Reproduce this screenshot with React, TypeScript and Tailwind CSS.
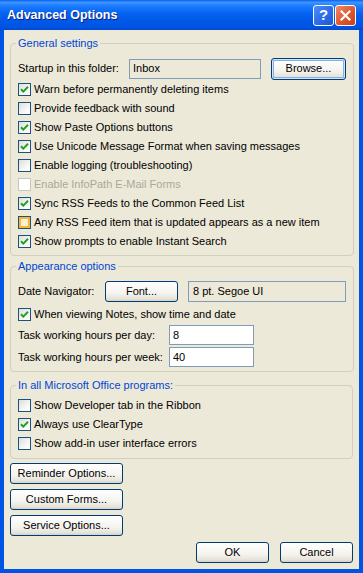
import React from 'react';

const FONT = "font-['Liberation_Sans','Arial',sans-serif]";

const btnBase =
  'flex items-center justify-center rounded-[3px] border border-[#003C74] bg-[linear-gradient(180deg,#FFFFFF_0%,#F4F3EE_60%,#E6E3D8_88%,#D6D0C5_100%)] text-[11px] text-black';

const XpButton: React.FC<{ label: string; className?: string; focused?: boolean }> = ({ label, className = '', focused }) => (
  <button
    className={`${btnBase} ${className} ${focused ? 'shadow-[inset_0_0_0_1px_#CEE7FF,inset_0_0_0_2px_#89ADE4]' : ''}`}
  >
    {label}
  </button>
);

const CheckBox: React.FC<{ checked?: boolean; disabled?: boolean; hot?: boolean }> = ({ checked, disabled, hot }) => {
  let cls = 'border-[#1C5180] bg-[linear-gradient(135deg,#DCDCD7_0%,#F6F6F4_60%,#FFFFFF_100%)]';
  if (disabled) cls = 'border-[#CAC8BB] bg-white';
  if (hot) cls = 'border-[#1C5180] bg-[#FFF0CF] shadow-[inset_0_0_0_2px_#F8B636]';
  return (
    <span className={`relative flex h-[13px] w-[13px] shrink-0 items-center justify-center border ${cls}`}>
      {checked && (
        <svg width="11" height="11" viewBox="0 0 11 11">
          <path d="M2 5.2 L4.3 7.6 L9 2.8" fill="none" stroke="#21A121" strokeWidth="2" />
        </svg>
      )}
    </span>
  );
};

const CheckRow: React.FC<{ label: string; checked?: boolean; disabled?: boolean; hot?: boolean }> = ({
  label,
  checked,
  disabled,
  hot,
}) => (
  <div className="flex h-[19px] items-center gap-[3px]">
    <CheckBox checked={checked} disabled={disabled} hot={hot} />
    <span className={disabled ? 'text-[#ACA899]' : 'text-black'}>{label}</span>
  </div>
);

const Group: React.FC<{ title: string; className?: string; children: React.ReactNode }> = ({ title, className = '', children }) => (
  <fieldset className={`rounded-[4px] border border-[#D0D0BF] px-[7px] ${className}`}>
    <legend className="ml-[-2px] px-[2px] text-[11px] leading-[13px] text-[#0046D5]">{title}</legend>
    {children}
  </fieldset>
);

const App: React.FC = () => {
  return (
    <div className={`flex h-[573px] w-[363px] flex-col ${FONT} text-[11px] text-black`}>
      {/* title bar */}
      <div className="flex h-[30px] shrink-0 items-center bg-[linear-gradient(180deg,#0A5FEF_0%,#3D95FF_8%,#1A7BFF_20%,#0562F0_45%,#0058E6_70%,#0054E3_90%,#0049CE_100%)] pl-[7px] pr-[7px]">
        <span className="flex-1 text-[12.5px] font-bold text-white [text-shadow:1px_1px_0_#0F1F7A]">Advanced Options</span>
        <div className="flex gap-[1px]">
          <div className="flex h-[21px] w-[21px] items-center justify-center rounded-[3px] border border-white bg-[linear-gradient(135deg,#4F8DFB_0%,#2E6FEA_50%,#1B57D6_100%)] text-[15px] font-bold text-white">
            ?
          </div>
          <div className="flex h-[21px] w-[21px] items-center justify-center rounded-[3px] border border-white bg-[linear-gradient(135deg,#EF8A69_0%,#E25A31_50%,#C8401A_100%)]">
            <svg width="13" height="13" viewBox="0 0 13 13">
              <path d="M2.5 2.5 L10.5 10.5 M10.5 2.5 L2.5 10.5" stroke="white" strokeWidth="2.2" strokeLinecap="square" />
            </svg>
          </div>
        </div>
      </div>

      {/* body */}
      <div className="flex flex-1 flex-col border-x-4 border-b-4 border-[#0054E3] bg-[#ECE9D8] px-[6px] pt-[7px]">
        <Group title="General settings" className="pb-[4px]">
          <div className="mt-[7px] flex h-[23px] items-center">
            <span className="w-[111px]">Startup in this folder:</span>
            <div className="flex h-[20px] w-[132px] items-center border border-[#7F9DB9] pl-[3px]">Inbox</div>
            <XpButton label="Browse..." focused className="ml-[10px] h-[22px] w-[75px]" />
          </div>
          <CheckRow label="Warn before permanently deleting items" checked />
          <CheckRow label="Provide feedback with sound" />
          <CheckRow label="Show Paste Options buttons" checked />
          <CheckRow label="Use Unicode Message Format when saving messages" checked />
          <CheckRow label="Enable logging (troubleshooting)" />
          <CheckRow label="Enable InfoPath E-Mail Forms" disabled />
          <CheckRow label="Sync RSS Feeds to the Common Feed List" checked />
          <CheckRow label="Any RSS Feed item that is updated appears as a new item" hot />
          <CheckRow label="Show prompts to enable Instant Search" checked />
        </Group>

        <Group title="Appearance options" className="mt-[4px] pb-[3px]">
          <div className="mt-[8px] flex h-[21px] items-center">
            <span className="w-[87px]">Date Navigator:</span>
            <XpButton label="Font..." className="h-[21px] w-[73px]" />
            <div className="ml-[10px] flex h-[21px] w-[158px] items-center border border-[#7F9DB9] pl-[4px]">8 pt. Segoe UI</div>
          </div>
          <div className="mt-[3px]">
            <CheckRow label="When viewing Notes, show time and date" checked />
          </div>
          <div className="flex h-[22px] items-center">
            <span className="w-[151px]">Task working hours per day:</span>
            <div className="flex h-[20px] w-[85px] items-center border border-[#7F9DB9] bg-white pl-[3px]">8</div>
          </div>
          <div className="flex h-[22px] items-center">
            <span className="w-[151px]">Task working hours per week:</span>
            <div className="flex h-[20px] w-[85px] items-center border border-[#7F9DB9] bg-white pl-[3px]">40</div>
          </div>
        </Group>

        <Group title="In all Microsoft Office programs:" className="mt-[7px] pb-[5px]">
          <div className="mt-[4px]">
            <CheckRow label="Show Developer tab in the Ribbon" />
            <CheckRow label="Always use ClearType" checked />
            <CheckRow label="Show add-in user interface errors" />
          </div>
        </Group>

        <div className="mt-[4px] flex flex-col gap-[5px]">
          <XpButton label="Reminder Options..." className="h-[21px] w-[113px]" />
          <XpButton label="Custom Forms..." className="h-[21px] w-[113px]" />
          <XpButton label="Service Options..." className="h-[21px] w-[113px]" />
        </div>

        <div className="mt-[6px] flex justify-end gap-[11px]">
          <XpButton label="OK" className="h-[21px] w-[73px]" />
          <XpButton label="Cancel" className="h-[21px] w-[73px]" />
        </div>
      </div>
    </div>
  );
};

export default App;
